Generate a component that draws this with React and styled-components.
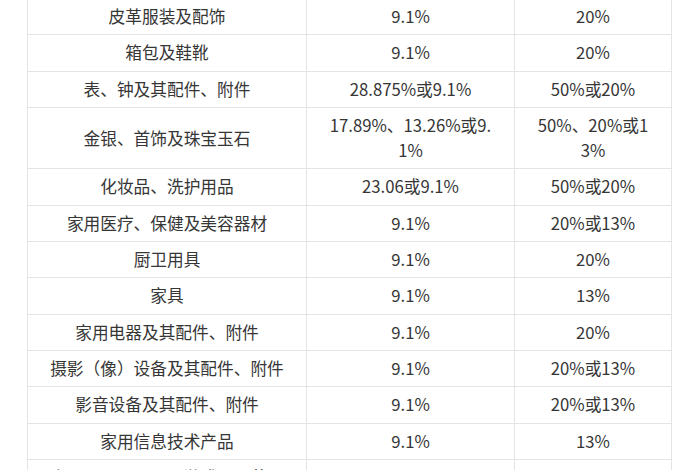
import React from 'react'
import styled, { createGlobalStyle } from 'styled-components'

const GlobalStyle = createGlobalStyle`
  html, body {
    margin: 0;
    padding: 0;
    background: #fff;
    overflow: hidden;
  }
  body {
    font-family: 'Noto Sans CJK SC', 'Noto Sans', sans-serif;
    color: #333;
  }
`

const Page = styled.div`
  width: 700px;
  height: 470px;
  overflow: hidden;
  padding-left: 27px;
  box-sizing: border-box;
`

const Table = styled.table`
  margin-top: -2px;
  width: 644px;
  table-layout: fixed;
  border-collapse: collapse;
  font-size: 16.7px;
  line-height: 25.3px;
`

const Col = styled.col`
  width: ${props => props.w}px;
`

const Cell = styled.td`
  border: 1px solid #e4e4e4;
  padding: 5px ${props => props.pad}px;
  text-align: center;
  vertical-align: middle;
  word-break: break-all;
  color: #363636;
`

const rows = [
  ['皮革服装及配饰', '9.1%', '20%'],
  ['箱包及鞋靴', '9.1%', '20%'],
  ['表、钟及其配件、附件', '28.875%或9.1%', '50%或20%'],
  ['金银、首饰及珠宝玉石', '17.89%、13.26%或9.1%', '50%、20%或13%'],
  ['化妆品、洗护用品', '23.06或9.1%', '50%或20%'],
  ['家用医疗、保健及美容器材', '9.1%', '20%或13%'],
  ['厨卫用具', '9.1%', '20%'],
  ['家具', '9.1%', '13%'],
  ['家用电器及其配件、附件', '9.1%', '20%'],
  ['摄影（像）设备及其配件、附件', '9.1%', '20%或13%'],
  ['影音设备及其配件、附件', '9.1%', '20%或13%'],
  ['家用信息技术产品', '9.1%', '13%'],
  ['文具用品、玩具、游戏品、节日或其他娱乐用品', '9.1%', '13%']
]

export default function App() {
  return (
    <Page>
      <GlobalStyle />
      <Table>
        <colgroup>
          <Col w={279} />
          <Col w={208} />
          <Col w={157} />
        </colgroup>
        <tbody>
          {rows.map((r, i) => (
            <tr key={i}>
              <Cell pad={18}>{r[0]}</Cell>
              <Cell pad={20}>{r[1]}</Cell>
              <Cell pad={20}>{r[2]}</Cell>
            </tr>
          ))}
        </tbody>
      </Table>
    </Page>
  )
}
